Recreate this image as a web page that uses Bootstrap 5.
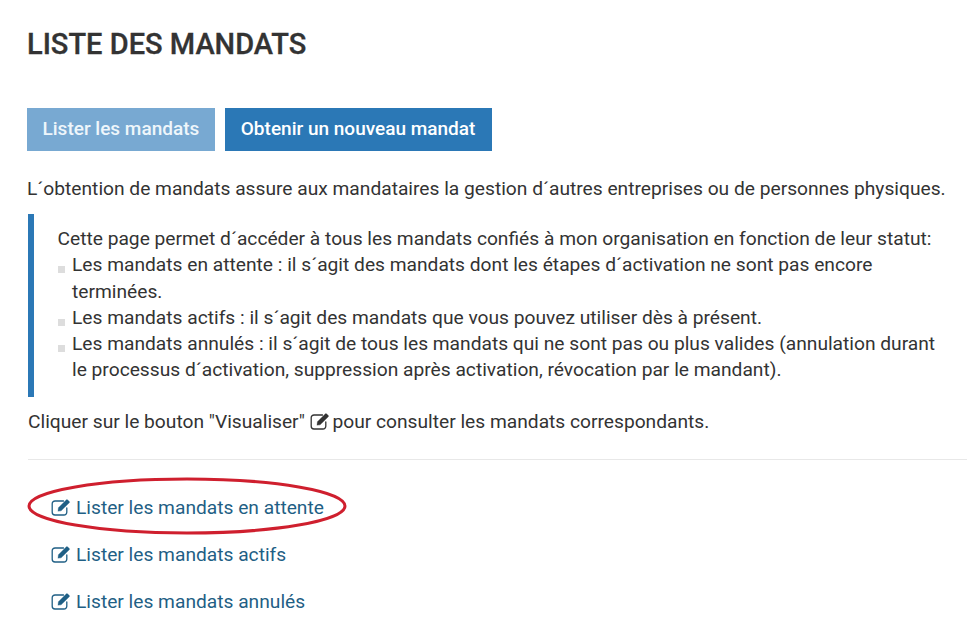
<!DOCTYPE html>
<html lang="fr"><head><meta charset="utf-8"><title>Liste des mandats</title>
<link href="https://cdn.jsdelivr.net/npm/bootstrap@5.3.0/dist/css/bootstrap.min.css" rel="stylesheet">
<style>
html,body{height:633px;overflow:hidden}
body{font-family:Roboto,sans-serif;font-size:19.2px;line-height:26px;color:#333;background:#fff}
.pg{padding:0 0 0 27px;position:relative}
.ttl{font-size:29px;font-weight:500;line-height:34px;color:#333;margin:0;padding-top:27px;text-transform:uppercase;-webkit-text-stroke:.3px #333}
.acts{margin-top:47px;gap:10px}
.bt{font-size:19px;font-weight:500;line-height:26px;padding:8px 16.5px 9px 16px;border:0;border-radius:0;background:#2b78b6;color:#fff}
.bt.off{padding-left:15.5px;padding-right:15.5px;background:#78a9d2;color:#eef6fb;opacity:1}
.intro{margin:25px 0 0;white-space:nowrap}
.note{margin:12px 0 0 1px;border-left:6px solid #2b78b6;padding:12px 20px 13px 23.5px;width:930px;line-height:26.3px}
.bul{list-style:none;margin:0;padding:0 0 0 14.5px}
.bul li{position:relative}
.bul li::before{content:"";position:absolute;left:-14.5px;top:14px;width:7px;height:7px;background:#ddd}
.clk{margin:12px 0 0 1px}
.sep{margin:24px 0 0 1px;border:0;border-top:1px solid #e8e8e8;opacity:1}
.lks{margin:35px 0 0 24px;gap:21px}
.lk{color:#1f5f85;text-decoration:none;display:block;width:max-content}
.ico{width:20px;height:18px;vertical-align:-2px;margin-right:5px}
.ico2{width:20px;height:18px;vertical-align:-2px;margin-right:-2px}
.oval{position:absolute;left:27px;top:477px;width:320px;height:58px}
</style></head><body>
<svg width="0" height="0" class="d-block position-absolute"><defs><g id="ed" fill="none" stroke="currentColor" stroke-linecap="round" stroke-linejoin="round"><path d="M12.5 3H4a2.8 2.8 0 0 0-2.8 2.8v8.4A2.8 2.8 0 0 0 4 17h9a2.8 2.8 0 0 0 2.8-2.8V10" stroke-width="1.3"/><path d="M7 13l.4-3.2L15.4 1.8a.8.8 0 0 1 1.1 0l1.8 1.8a.8.8 0 0 1 0 1.1l-8.1 8z" fill="currentColor" stroke-width=".3"/></g></defs></svg>
<main class="pg">
<h1 class="ttl">Liste des mandats</h1>
<div class="d-flex acts">
<button class="btn bt off" type="button">Lister les mandats</button>
<button class="btn bt" type="button">Obtenir un nouveau mandat</button>
</div>
<p class="intro">L´obtention de mandats assure aux mandataires la gestion d´autres entreprises ou de personnes physiques.</p>
<div class="note">Cette page permet d´accéder à tous les mandats confiés à mon organisation en fonction de leur statut:
<ul class="bul">
<li>Les mandats en attente : il s´agit des mandats dont les étapes d´activation ne sont pas encore terminées.</li>
<li>Les mandats actifs : il s´agit des mandats que vous pouvez utiliser dès à présent.</li>
<li>Les mandats annulés : il s´agit de tous les mandats qui ne sont pas ou plus valides (annulation durant le processus d´activation, suppression après activation, révocation par le mandant).</li>
</ul></div>
<p class="clk">Cliquer sur le bouton "Visualiser" <svg class="ico2" viewBox="0 0 20 18"><use href="#ed"/></svg> pour consulter les mandats correspondants.</p>
<hr class="sep">
<div class="d-flex flex-column lks">
<a class="lk" href="#"><svg class="ico" viewBox="0 0 20 18"><use href="#ed"/></svg>Lister les mandats en attente</a>
<a class="lk" href="#"><svg class="ico" viewBox="0 0 20 18"><use href="#ed"/></svg>Lister les mandats actifs</a>
<a class="lk" href="#"><svg class="ico" viewBox="0 0 20 18"><use href="#ed"/></svg>Lister les mandats annulés</a>
</div>
<svg class="oval" viewBox="0 0 320 58"><ellipse cx="160" cy="29" rx="158" ry="27" fill="none" stroke="#cf1f2e" stroke-width="3"/></svg>
</main>
<script src="https://cdn.jsdelivr.net/npm/bootstrap@5.3.0/dist/js/bootstrap.bundle.min.js"></script>
</body></html>
